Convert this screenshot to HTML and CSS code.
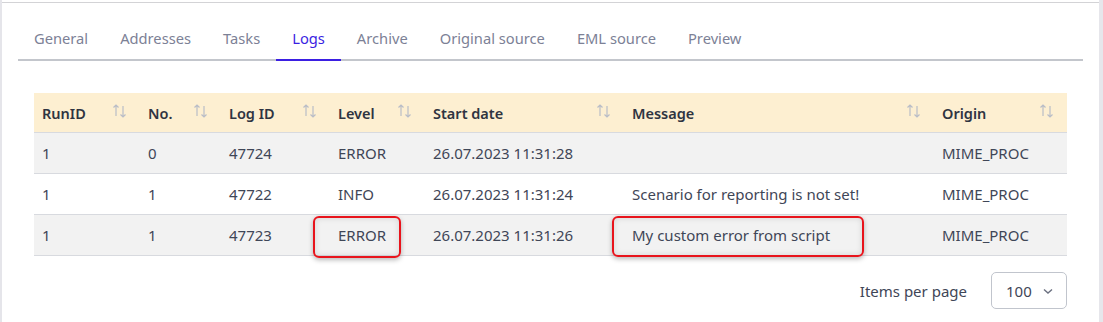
FILE: index.html
```html
<!DOCTYPE html>
<html>
<head>
<meta charset="utf-8">
<link rel="stylesheet" href="styles.css">
</head>
<body>
<div class="frame">
  <div class="card">
    <nav class="tabs">
      <div class="tab">General</div>
      <div class="tab">Addresses</div>
      <div class="tab">Tasks</div>
      <div class="tab active">Logs</div>
      <div class="tab">Archive</div>
      <div class="tab">Original source</div>
      <div class="tab">EML source</div>
      <div class="tab">Preview</div>
    </nav>
    <div class="content">
      <table class="grid">
        <colgroup>
          <col class="c1"><col class="c2"><col class="c3"><col class="c4"><col class="c5"><col class="c6"><col class="c7">
        </colgroup>
        <thead>
          <tr>
            <th><div class="hc"><span>RunID</span><svg class="sort" viewBox="0 0 16 18"><path d="M4 14V3M1.5 5.5L4 3 6.5 5.5M11 4v11M8.5 12.5L11 15l2.5-2.5"/></svg></div></th>
            <th><div class="hc"><span>No.</span><svg class="sort" viewBox="0 0 16 18"><path d="M4 14V3M1.5 5.5L4 3 6.5 5.5M11 4v11M8.5 12.5L11 15l2.5-2.5"/></svg></div></th>
            <th><div class="hc"><span>Log ID</span><svg class="sort" viewBox="0 0 16 18"><path d="M4 14V3M1.5 5.5L4 3 6.5 5.5M11 4v11M8.5 12.5L11 15l2.5-2.5"/></svg></div></th>
            <th><div class="hc"><span>Level</span><svg class="sort" viewBox="0 0 16 18"><path d="M4 14V3M1.5 5.5L4 3 6.5 5.5M11 4v11M8.5 12.5L11 15l2.5-2.5"/></svg></div></th>
            <th><div class="hc"><span>Start date</span><svg class="sort" viewBox="0 0 16 18"><path d="M4 14V3M1.5 5.5L4 3 6.5 5.5M11 4v11M8.5 12.5L11 15l2.5-2.5"/></svg></div></th>
            <th><div class="hc"><span>Message</span><svg class="sort" viewBox="0 0 16 18"><path d="M4 14V3M1.5 5.5L4 3 6.5 5.5M11 4v11M8.5 12.5L11 15l2.5-2.5"/></svg></div></th>
            <th><div class="hc"><span>Origin</span><svg class="sort" viewBox="0 0 16 18"><path d="M4 14V3M1.5 5.5L4 3 6.5 5.5M11 4v11M8.5 12.5L11 15l2.5-2.5"/></svg></div></th>
          </tr>
        </thead>
        <tbody>
          <tr class="odd">
            <td>1</td><td>0</td><td>47724</td><td>ERROR</td><td>26.07.2023 11:31:28</td><td></td><td>MIME_PROC</td>
          </tr>
          <tr>
            <td>1</td><td>1</td><td>47722</td><td>INFO</td><td>26.07.2023 11:31:24</td><td>Scenario for reporting is not set!</td><td>MIME_PROC</td>
          </tr>
          <tr class="odd">
            <td>1</td><td>1</td><td>47723</td><td class="mark"><span class="hl hl-level"></span>ERROR</td><td>26.07.2023 11:31:26</td><td class="mark"><span class="hl hl-msg"></span>My custom error from script</td><td>MIME_PROC</td>
          </tr>
        </tbody>
      </table>
      <div class="pager">
        <span class="pager-label">Items per page</span>
        <div class="select">
          <span>100</span>
          <svg class="chev" viewBox="0 0 12 12"><path d="M2 4.5l4 3.5 4-3.5"/></svg>
        </div>
      </div>
    </div>
  </div>
</div>
</body>
</html>
```

FILE: styles.css
```css
html, body {
  margin: 0;
  padding: 0;
}
body {
  width: 1103px;
  height: 322px;
  overflow: hidden;
  background: #ffffff;
  font-family: "Noto Sans", "Open Sans", sans-serif;
  font-size: 15px;
  color: #3f4657;
}
.frame {
  height: 322px;
  box-sizing: border-box;
  border-left: 2px solid #e5e5ea;
  border-right: 4px solid #e6e6eb;
  padding-top: 2px;
  background: #fff;
}
.card {
  border-top: 1px solid #d3d3d6;
  padding: 0 16px 0 16px;
}
.tabs {
  display: flex;
  border-bottom: 2px solid #c3c6cc;
  height: 58px;
  box-sizing: border-box;
  padding-top: 17px;
}
.tab {
  padding: 0 16px;
  box-sizing: border-box;
  margin-bottom: -2px;
  border-bottom: 2px solid transparent;
  height: 41px;
  line-height: 37px;
  font-size: 14.7px;
  color: #7c8196;
}
.tab.active {
  color: #3b1fe2;
  border-bottom-color: #3b1fe2;
}
.content {
  padding: 32px 16px 0 16px;
}
.grid {
  width: 1033px;
  border-collapse: collapse;
  table-layout: fixed;
}
.c1 { width: 106px; }
.c2 { width: 81px; }
.c3 { width: 109px; }
.c4 { width: 95px; }
.c5 { width: 199px; }
.c6 { width: 310px; }
.c7 { width: 133px; }
.grid th {
  background: #fdefd1;
  height: 39px;
  padding: 0 12px 0 8px;
  text-align: left;
  font-size: 14.5px;
  font-weight: 600;
  color: #2f3441;
  border-bottom: 1px solid #d8dadf;
}
.hc {
  display: flex;
  align-items: center;
  justify-content: space-between;
}
.sort {
  width: 16px;
  height: 18px;
  fill: none;
  stroke: #b9bdc7;
  stroke-width: 1.2;
  margin-top: -3px;
}
.grid td {
  height: 40px;
  padding: 0 8px;
  border-bottom: 1px solid #d8dadf;
  white-space: nowrap;
}
.grid tr.odd td {
  background: #f2f2f2;
}
.mark {
  position: relative;
}
.hl {
  position: absolute;
  top: 1px;
  height: 38px;
  border: 2px solid #e8141c;
  border-radius: 6px;
  box-shadow: 0 2px 5px rgba(0,0,0,0.28), inset 0 0 6px rgba(0,0,0,0.12);
}
.hl-level {
  left: -17px;
  width: 84px;
}
.hl-msg {
  left: -12px;
  width: 248px;
  height: 37px;
}
.pager {
  display: flex;
  justify-content: flex-end;
  align-items: center;
  gap: 24px;
  margin-top: 16px;
}
.pager-label {
  color: #3f4657;
}
.select {
  width: 76px;
  height: 37px;
  box-sizing: border-box;
  border: 1px solid #c1c5cd;
  border-radius: 5px;
  display: flex;
  align-items: center;
  padding-left: 14px;
  gap: 10px;
  color: #3f4657;
}
.chev {
  width: 12px;
  height: 12px;
  fill: none;
  stroke: #6b7080;
  stroke-width: 1.4;
}
```
